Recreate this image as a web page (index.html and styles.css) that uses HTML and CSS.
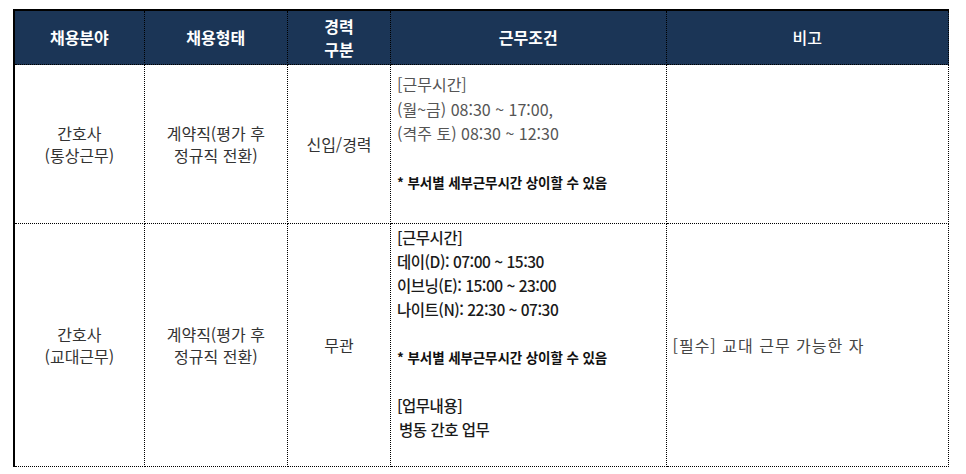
FILE: index.html
```html
<!DOCTYPE html>
<html lang="ko">
<head>
<meta charset="utf-8">
<link rel="stylesheet" href="styles.css">
</head>
<body>
<table class="jobs">
  <colgroup>
    <col class="c1"><col class="c2"><col class="c3"><col class="c4"><col class="c5">
  </colgroup>
  <thead>
    <tr class="head">
      <th>채용분야</th>
      <th>채용형태</th>
      <th>경력<br>구분</th>
      <th>근무조건</th>
      <th class="thin">비고</th>
    </tr>
  </thead>
  <tbody>
    <tr class="r1">
      <td class="center">간호사<br>(통상근무)</td>
      <td class="center">계약직(평가 후<br>정규직 전환)</td>
      <td class="center">신입/경력</td>
      <td class="cond">
        <div class="line">[근무시간]</div>
        <div class="line">(월~금) 08:30 ~ 17:00,</div>
        <div class="line">(격주 토) 08:30 ~ 12:30</div>
        <div class="line blank"></div>
        <div class="line note">* 부서별 세부근무시간 상이할 수 있음</div>
      </td>
      <td></td>
    </tr>
    <tr class="r2">
      <td class="center">간호사<br>(교대근무)</td>
      <td class="center">계약직(평가 후<br>정규직 전환)</td>
      <td class="center">무관</td>
      <td class="cond dark">
        <div class="line">[근무시간]</div>
        <div class="line">데이(D): 07:00 ~ 15:30</div>
        <div class="line">이브닝(E): 15:00 ~ 23:00</div>
        <div class="line">나이트(N): 22:30 ~ 07:30</div>
        <div class="line blank"></div>
        <div class="line note">* 부서별 세부근무시간 상이할 수 있음</div>
        <div class="line blank"></div>
        <div class="line">[업무내용]</div>
        <div class="line indent">병동 간호 업무</div>
      </td>
      <td class="remark">[필수] 교대 근무 가능한 자</td>
    </tr>
  </tbody>
</table>
</body>
</html>
```

FILE: styles.css
```css
html, body {
  margin: 0;
  padding: 0;
  background: #fff;
}
body {
  padding: 9px 0 0 13px;
  font-family: "Noto Sans CJK KR", "Noto Sans", sans-serif;
}
.jobs {
  border-collapse: collapse;
  table-layout: fixed;
  width: 936px;
  border-top: 2px solid #000;
  border-left: 2px solid #000;
}
.c1 { width: 130px; }
.c2 { width: 143px; }
.c3 { width: 103px; }
.c4 { width: 275px; }
.c5 { width: 282px; }
.jobs th, .jobs td {
  border: 1px dotted #000;
  padding: 0;
}
.jobs th {
  background: #1b3556;
  color: #fff;
  font-size: 16px;
  font-weight: 700;
  line-height: 23px;
  height: 53px;
  text-align: center;
  vertical-align: middle;
}
.jobs th.thin { font-weight: 500; }
.jobs td {
  font-size: 16px;
  color: #333;
  line-height: 22px;
  vertical-align: middle;
}
.r1 td { height: 158px; }
.r2 td { height: 242px; }
.center {
  text-align: center;
}
.jobs td.cond {
  vertical-align: top;
  padding: 0 0 0 6px;
  color: #555;
}
.jobs .r1 td.cond { padding-top: 7px; height: 151px; }
.jobs .r2 td.cond { padding-top: 1px; height: 241px; color: #1a1a1a; }
.cond .line {
  height: 24.5px;
  line-height: 24px;
  font-size: 16px;
  white-space: nowrap;
}
.cond .note {
  font-size: 13.5px;
  font-weight: 700;
  color: #111;
  letter-spacing: -0.1px;
}
.cond.dark .line {
  height: 24px;
  font-size: 15.5px;
  font-weight: 500;
  letter-spacing: -0.5px;
}
.cond.dark .note {
  font-size: 13.5px;
  font-weight: 700;
  letter-spacing: -0.1px;
}
.cond .indent { padding-left: 2px; }
.jobs td.remark {
  padding-left: 6px;
  color: #444;
  letter-spacing: 1px;
}
```
